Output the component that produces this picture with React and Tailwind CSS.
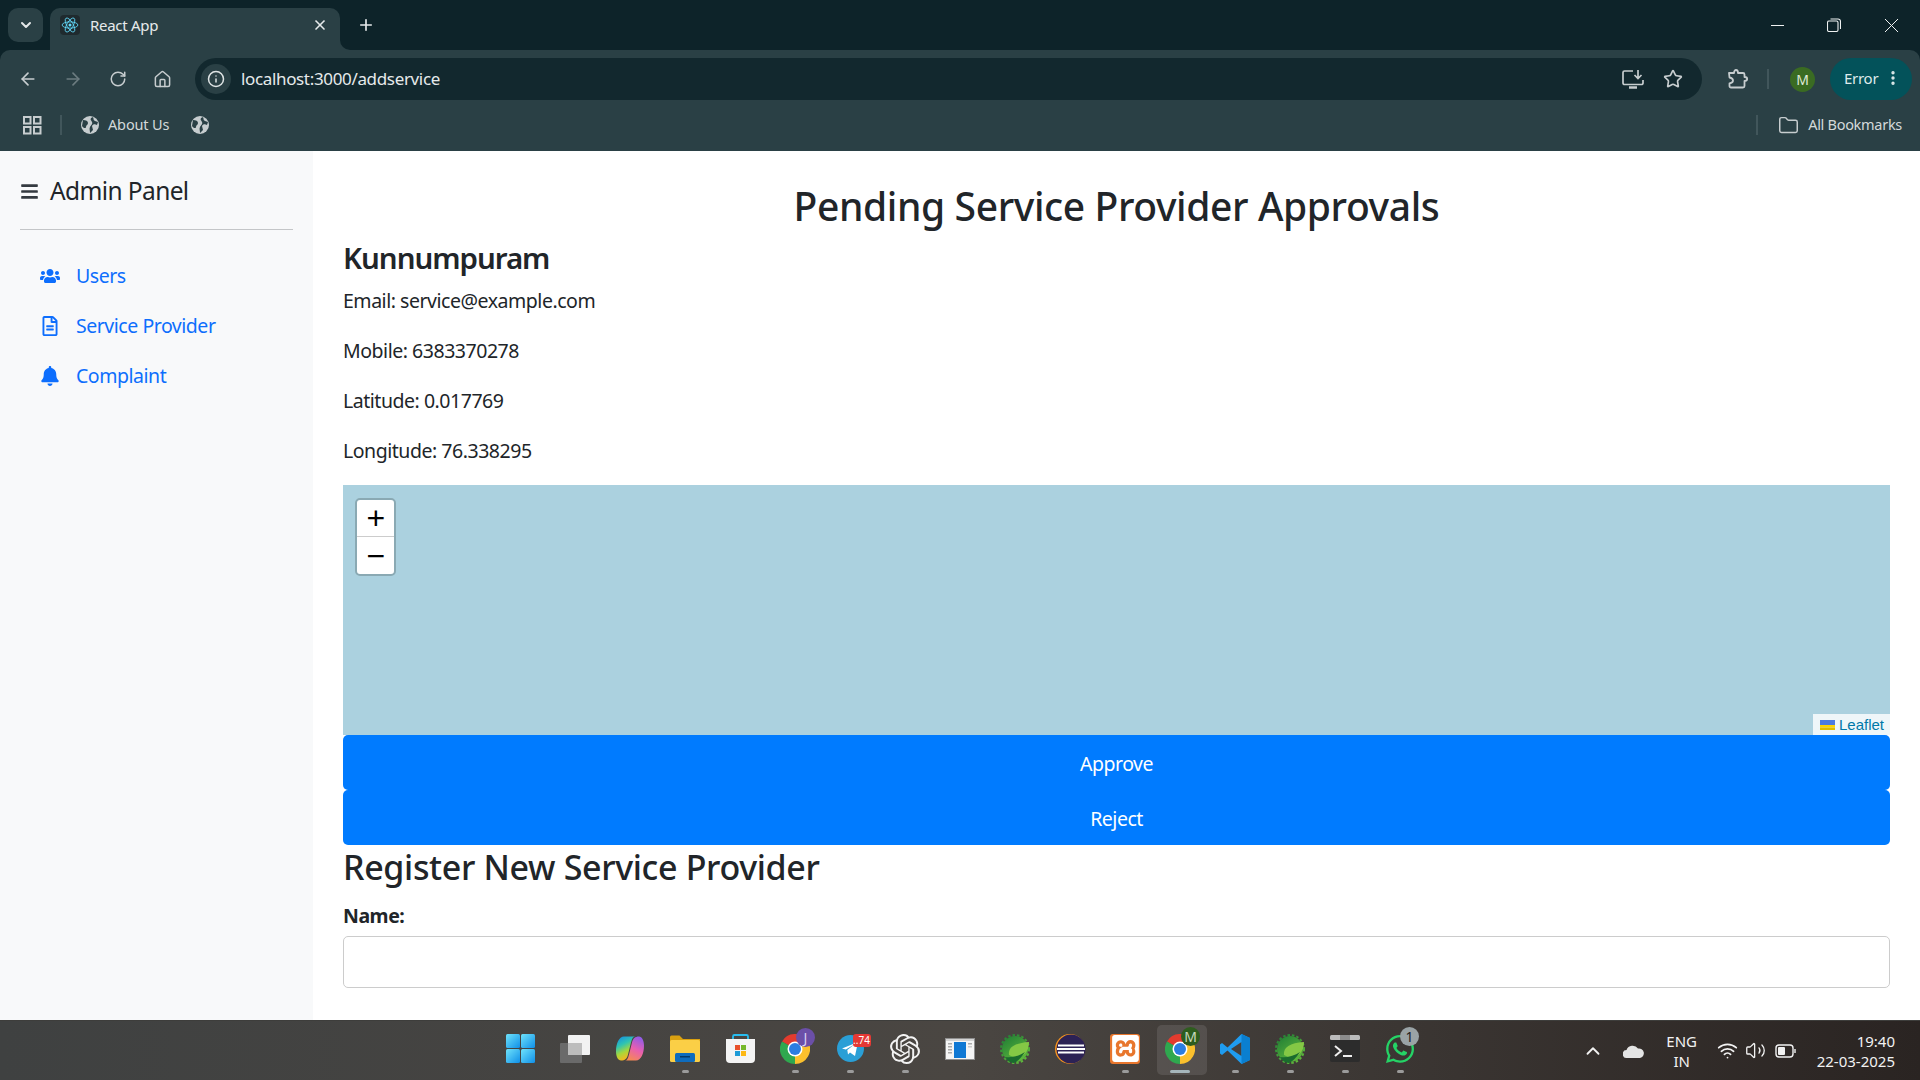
import { FaBars, FaUsers, FaRegFileAlt, FaBell, FaWhatsapp } from "react-icons/fa";
import { SiOpenai, SiXampp } from "react-icons/si";
import {
  ChevronDown, X, Plus, ArrowLeft, ArrowRight, RotateCw, Home, Info, Star,
  EllipsisVertical, Folder, ChevronUp, Wifi, Volume2,
} from "lucide-react";

const Globe = () => (
  <svg width="18" height="18" viewBox="0 0 18 18">
    <circle cx="9" cy="9" r="9" fill="#c7cdcf" />
    <path d="M2 4c3 0 5 1 5 3s-2 2-2 4-3 1-4-1zM12 1c1 2 0 3 2 4l3 1-1 3c-2-1-4-1-5 1l1 4-3 3c0-3-1-4 0-6s3-3 2-5-2-2-1-4z" fill="#2a4045" />
  </svg>
);

const ReactLogo = () => (
  <div className="w-5 h-5 bg-[#1f2a2e] rounded-sm flex items-center justify-center">
    <svg width="18" height="18" viewBox="-12 -12 24 24" fill="none" stroke="#61dafb" strokeWidth="1.1">
      <circle r="2" fill="#61dafb" stroke="none" />
      <ellipse rx="10.5" ry="4.2" />
      <ellipse rx="10.5" ry="4.2" transform="rotate(60)" />
      <ellipse rx="10.5" ry="4.2" transform="rotate(120)" />
    </svg>
  </div>
);

const InstallIcon = () => (
  <svg width="22" height="20" viewBox="0 0 22 20" fill="none" stroke="#c7cdcf" strokeWidth="1.7">
    <path d="M11 2H2.500A1.500 1.500 0 0 0 1 3.500V14a1.500 1.500 0 0 0 1.500 1.500h17A1.500 1.500 0 0 0 21 14v-3" />
    <path d="M16 1v8M12.500 6l3.500 3.500L19.500 6" />
    <path d="M7 18.500h8" strokeWidth="2.500" />
  </svg>
);

const ExtensionIcon = () => (
  <svg width="21" height="20" viewBox="0 0 21 20" fill="none" stroke="#c7cdcf" strokeWidth="1.800" strokeLinejoin="round">
    <path d="M2 4h5c0-4 4-4 4 0h5a1.500 1.500 0 0 1 1.500 1.500V8c3.500 0 3.500 4 0 4v5a1.500 1.500 0 0 1-1.500 1.500H4a1.500 1.500 0 0 1-1.500-1.500v-2.500C5 14 6 13 6 11.500S5 9 2.500 8.500z" />
  </svg>
);

const Dot = ({ wide }) => (
  <div className={wide ? "w-[20px] h-[3px] rounded-full bg-[#a6b6bb]" : "w-[7px] h-[3px] rounded-full bg-[#9b9b9b]"} />
);

const WindowsIcon = () => (
  <svg width="29" height="29" viewBox="0 0 29 29">
    <defs>
      <linearGradient id="win" x1="0" y1="0" x2="1" y2="1">
        <stop offset="0" stopColor="#6fe3fb" />
        <stop offset="1" stopColor="#0f8fe8" />
      </linearGradient>
    </defs>
    <rect width="14" height="14" rx="1.500" fill="url(#win)" />
    <rect x="15" width="14" height="14" rx="1.500" fill="url(#win)" />
    <rect y="15" width="14" height="14" rx="1.500" fill="url(#win)" />
    <rect x="15" y="15" width="14" height="14" rx="1.500" fill="url(#win)" />
  </svg>
);

const TaskViewIcon = () => (
  <svg width="30" height="28" viewBox="0 0 30 28">
    <rect x="0" y="8" width="22" height="20" rx="1" fill="#6a6a6a" />
    <rect x="8" y="0" width="22" height="20" rx="1" fill="#f2f2f2" />
    <rect x="8" y="8" width="14" height="12" fill="#bdbdbd" />
  </svg>
);

const CopilotIcon = () => (
  <svg width="28" height="25" viewBox="0 0 28 24">
    <defs>
      <linearGradient id="cp1" x1="0" y1="0" x2="0.4" y2="1">
        <stop offset="0" stopColor="#1288e8" />
        <stop offset="0.4" stopColor="#2fc4b2" />
        <stop offset="0.7" stopColor="#a8d83a" />
        <stop offset="1" stopColor="#f9b51f" />
      </linearGradient>
      <linearGradient id="cp2" x1="0.7" y1="0" x2="0.3" y2="1">
        <stop offset="0" stopColor="#8f5ce8" />
        <stop offset="0.5" stopColor="#e85fb0" />
        <stop offset="1" stopColor="#f68a52" />
      </linearGradient>
    </defs>
    <path d="M8 0h11c-2 0-3 2-4 6l-3 12c-1 4-3 6-7 6-3 0-5-4-5-9C0 7 3 0 8 0z" fill="url(#cp1)" />
    <path d="M20 24H9c2 0 3-2 4-6l3-12c1-4 3-6 7-6 3 0 5 4 5 9 0 8-3 15-8 15z" fill="url(#cp2)" />
  </svg>
);

const ExplorerIcon = () => (
  <svg width="30" height="27" viewBox="0 0 30 27">
    <path d="M0 2a1.500 1.500 0 0 1 1.500-1.500h8L13 4h17v4H0z" fill="#d9a010" />
    <rect y="5" width="30" height="22" rx="1.500" fill="#fbcf46" />
    <rect x="5" y="18" width="20" height="9" rx="1.500" fill="#0f6cbd" />
    <rect x="10" y="21" width="10" height="1.500" fill="#063a69" />
  </svg>
);

const StoreIcon = () => (
  <svg width="29" height="29" viewBox="0 0 29 29">
    <path d="M7 5V2.500A1.500 1.500 0 0 1 8.500 1h12A1.500 1.500 0 0 1 22 2.500V5" fill="none" stroke="#28bdf0" strokeWidth="1.800" />
    <path d="M0 5h29v20a4 4 0 0 1-4 4H4a4 4 0 0 1-4-4z" fill="#f4f4f4" />
    <rect x="9" y="11" width="5" height="5" fill="#e8502a" />
    <rect x="15" y="11" width="5" height="5" fill="#76b82a" />
    <rect x="9" y="17" width="5" height="5" fill="#1e9bd7" />
    <rect x="15" y="17" width="5" height="5" fill="#fdb813" />
  </svg>
);

const ChromeIcon = () => (
  <svg width="30" height="30" viewBox="0 0 30 30">
    <path d="M15 15 2 7.500A15 15 0 0 1 28 7.500z" fill="#e33b2e" />
    <path d="M15 15 2 7.500A15 15 0 0 0 15 30z" fill="#2fa84f" />
    <path d="M15 15 28 7.500A15 15 0 0 1 15 30z" fill="#fbc02d" />
    <circle cx="15" cy="15" r="7.500" fill="#fff" />
    <circle cx="15" cy="15" r="6" fill="#2a7de1" />
  </svg>
);

const TelegramIcon = () => (
  <svg width="27" height="27" viewBox="0 0 27 27">
    <circle cx="13.500" cy="13.500" r="13.500" fill="#2a9fd6" />
    <path d="M5 13.500 21 7l-3 14-5-3.500-2 2-.7-4.500 7-5.500-8.500 5z" fill="#fff" />
  </svg>
);

const SandboxIcon = () => (
  <svg width="30" height="22" viewBox="0 0 30 22">
    <rect x="0.500" y="0.500" width="29" height="21" fill="#f5f5f5" stroke="#8f8f8f" />
    <rect x="1" y="1" width="28" height="2" fill="#d4d4d4" />
    <rect x="3" y="5" width="4" height="1.500" fill="#aaa" />
    <rect x="3" y="8" width="4" height="1.500" fill="#aaa" />
    <rect x="3" y="11" width="4" height="1.500" fill="#aaa" />
    <rect x="3" y="14" width="4" height="1.500" fill="#aaa" />
    <rect x="23" y="5" width="4" height="1.500" fill="#aaa" />
    <rect x="23" y="8" width="4" height="1.500" fill="#ccc" />
    <rect x="9" y="4" width="12" height="16" fill="#0f78d4" />
  </svg>
);

const SpringIcon = ({ id }) => (
  <svg width="30" height="30" viewBox="0 0 30 30">
    <defs>
      <linearGradient id={id} x1="0" y1="0" x2="0.7" y2="1">
        <stop offset="0" stopColor="#1f7d35" />
        <stop offset="1" stopColor="#5fb83c" />
      </linearGradient>
    </defs>
    <circle cx="15" cy="15" r="13" fill={`url(#${id})`} />
    <circle cx="15" cy="15" r="14" fill="none" stroke={`url(#${id})`} strokeWidth="2" strokeDasharray="2.500 2" />
    <path d="M9 21C8 13 15 9 29 8c0 9-5 15-13 15-3 0-5-1-7-2z" fill="#84c845" />
    <path d="M5 23c7 1 14-1 20-5-4 6-7 9-11 11-4 0-7-3-9-6z" fill="#1a6b2e" />
  </svg>
);

const EclipseIcon = () => (
  <svg width="31" height="30" viewBox="0 0 31 30">
    <circle cx="15" cy="15" r="15" fill="#f7941e" />
    <circle cx="16" cy="15" r="14.500" fill="#2c2255" />
    <rect x="3" y="10.500" width="26" height="2" fill="#fff" />
    <rect x="2" y="14" width="28" height="2" fill="#fff" />
    <rect x="3" y="17.500" width="26" height="2" fill="#fff" />
  </svg>
);

const XamppIcon = () => (
  <div className="w-[30px] h-[30px] rounded-[3px] bg-[#e8762d] flex items-center justify-center">
    <SiXampp size={27} color="#fff" />
  </div>
);

const VscodeIcon = () => (
  <svg width="30" height="30" viewBox="0 0 30 30">
    <path d="M21.500 0 30 4v22l-8.500 4-14-13.500L2 21l-2-1.500v-9L2 9l5.500 4.500z" fill="#1f9cf0" />
    <path d="M21.500 8 11 15l10.500 7z" fill="#45403d" />
    <path d="M21.500 0 30 4v22l-8.500 4z" fill="#0a7fd0" />
  </svg>
);

const TerminalIcon = () => (
  <svg width="30" height="27" viewBox="0 0 30 27">
    <rect width="30" height="27" rx="2" fill="#2c2c2c" />
    <rect width="30" height="5" rx="1.500" fill="#bcbcbc" />
    <rect x="10" width="10" height="5" fill="#8c8c8c" />
    <path d="m5 11 6 5-6 5" fill="none" stroke="#eee" strokeWidth="2" />
    <rect x="13" y="20" width="9" height="2" fill="#eee" />
  </svg>
);

const apps = [
  { icon: <WindowsIcon /> },
  { icon: <TaskViewIcon /> },
  { icon: <CopilotIcon /> },
  { icon: <ExplorerIcon />, dot: true },
  { icon: <StoreIcon /> },
  {
    icon: <ChromeIcon />,
    dot: true,
    badge: <div className="absolute -top-[6px] left-[16px] w-[19px] h-[19px] rounded-full bg-[#6b4fa8] text-[#d9cdf0] text-[14px] flex items-center justify-center">J</div>,
  },
  {
    icon: <TelegramIcon />,
    dot: true,
    badge: <div className="absolute -top-[1px] left-[16px] h-[13px] w-[18px] rounded-[3px] bg-[#e53935] text-white text-[10px] leading-[13px] text-center">..74</div>,
  },
  { icon: <SiOpenai size={30} color="#f2f2f2" />, dot: true },
  { icon: <SandboxIcon /> },
  { icon: <SpringIcon id="spring1" /> },
  { icon: <EclipseIcon /> },
  { icon: <XamppIcon />, dot: true },
  {
    icon: <ChromeIcon />,
    dot: true,
    active: true,
    badge: <div className="absolute -top-[7px] left-[16px] w-[19px] h-[19px] rounded-full bg-[#2e5d1e] text-[#c7d8bd] text-[14px] flex items-center justify-center">M</div>,
  },
  { icon: <VscodeIcon />, dot: true },
  { icon: <SpringIcon id="spring2" />, dot: true },
  { icon: <TerminalIcon />, dot: true },
  {
    icon: <FaWhatsapp size={32} color="#25d366" />,
    dot: true,
    badge: <div className="absolute -top-[6px] left-[16px] w-[19px] h-[19px] rounded-full bg-[#9aa3a6] text-[#222] text-[14px] flex items-center justify-center">1</div>,
  },
];

const Chrome = () => (
  <div className="bg-[#0d2329]">
    {/* tab strip */}
    <div className="h-[50px] flex items-end pl-[8px]">
      <div className="w-[35px] h-[34px] mb-[8px] rounded-[10px] bg-[#2a4045] flex items-center justify-center">
        <ChevronDown size={16} color="#e4e8e9" strokeWidth={3} />
      </div>
      <div className="relative w-[290px] h-[42px] ml-[7px] rounded-t-[10px] bg-[#2a4045] flex items-center pl-[10px] pr-[12px] pb-[8px]">
        <ReactLogo />
        <span className="ml-[10px] text-[15px] tracking-[-0.02em] text-[#e6eaeb]">React App</span>
        <X size={16} color="#e6eaeb" strokeWidth={2.5} className="ml-auto" />
        <div className="absolute left-full bottom-0 w-[10px] h-[10px] bg-[#2a4045]">
          <div className="w-full h-full rounded-bl-[10px] bg-[#0d2329]" />
        </div>
      </div>
      <div className="ml-[17px] mb-[8px] h-[34px] flex items-center">
        <Plus size={18} color="#e6eaeb" strokeWidth={2.2} />
      </div>
      <div className="ml-auto flex items-center h-[50px] pr-[22px] text-[#eef1f1]">
        <svg width="13" height="13" viewBox="0 0 13 13" fill="none" stroke="currentColor" strokeWidth="1">
          <path d="M0 6.500h13" />
        </svg>
        <svg className="ml-[43px]" width="14" height="14" viewBox="0 0 14 14" fill="none" stroke="currentColor" strokeWidth="1.100">
          <rect x="0.500" y="3" width="10.500" height="10.500" rx="1.500" />
          <path d="M3.500 1h7.500a2.500 2.500 0 0 1 2.500 2.500V11" />
        </svg>
        <svg className="ml-[44px]" width="13" height="13" viewBox="0 0 13 13" fill="none" stroke="currentColor" strokeWidth="1">
          <path d="M0 0l13 13M13 0L0 13" />
        </svg>
      </div>
    </div>

    {/* toolbar */}
    <div className="h-[60px] rounded-t-[10px] bg-[#2a4045] flex items-center pl-[18px] pr-[8px] pb-[2px]">
      <ArrowLeft size={20} color="#c7cdcf" strokeWidth={2} />
      <ArrowRight size={20} color="#6c7c80" strokeWidth={2} className="ml-[25px]" />
      <RotateCw size={18} color="#c7cdcf" strokeWidth={2} className="ml-[26px]" />
      <Home size={19} color="#c7cdcf" strokeWidth={1.9} className="ml-[26px]" />
      <div className="ml-[23px] w-[1509px] h-[42px] rounded-full bg-[#12282e] flex items-center pl-[6px] pr-[19px]">
        <div className="w-[30px] h-[30px] rounded-full bg-[#2a4045] flex items-center justify-center">
          <Info size={18} color="#dfe4e5" strokeWidth={2} />
        </div>
        <span className="ml-[10px] text-[17px] tracking-[-0.02em] text-[#e6eaeb]">localhost:3000/addservice</span>
        <div className="ml-auto flex items-center">
          <InstallIcon />
          <Star size={20} color="#c7cdcf" strokeWidth={2} className="ml-[19px]" />
        </div>
      </div>
      <div className="ml-[25px]"><ExtensionIcon /></div>
      <div className="ml-[19px] w-[2px] h-[20px] bg-[#41565b]" />
      <div className="ml-[21px] w-[25px] h-[25px] rounded-full bg-[#3a6b22] text-[#dfe9d8] text-[14px] flex items-center justify-center">M</div>
      <div className="ml-[15px] w-[82px] h-[42px] rounded-full bg-[#03525a] flex items-center pl-[14px] pb-[2px] text-[15px] tracking-[-0.02em] text-[#dfeaeb]">
        Error
        <EllipsisVertical size={18} color="#dfeaeb" strokeWidth={2.5} className="ml-[6px]" />
      </div>
    </div>

    {/* bookmarks */}
    <div className="h-[41px] bg-[#2a4045] flex items-center pl-[23px] pr-[18px] pb-[11px] text-[14.5px] tracking-[-0.01em] text-[#d3d9da]">
      <svg width="19" height="19" viewBox="0 0 19 19" fill="none" stroke="#c7cdcf" strokeWidth="2">
        <rect x="1" y="1" width="6.500" height="6.500" />
        <rect x="11" y="1" width="6.500" height="6.500" />
        <rect x="1" y="11" width="6.500" height="6.500" />
        <rect x="11" y="11" width="6.500" height="6.500" />
      </svg>
      <div className="ml-[18px] w-[2px] h-[20px] bg-[#41565b]" />
      <div className="ml-[19px]"><Globe /></div>
      <span className="ml-[9px]">About Us</span>
      <div className="ml-[22px]"><Globe /></div>
      <div className="ml-auto w-[2px] h-[20px] bg-[#41565b]" />
      <Folder size={21} color="#c7cdcf" strokeWidth={1.7} className="ml-[20px]" />
      <span className="ml-[9px] tracking-[-0.02em]">All Bookmarks</span>
    </div>
  </div>
);

const Sidebar = () => (
  <aside className="w-[313px] shrink-0 bg-[#f8f9fa] px-[20px]">
    <div className="h-[79px] flex items-center border-b border-[#c4c6c8] pt-[2px]">
      <FaBars size={19} color="#343a40" />
      <span className="ml-[11px] text-[24.500px] tracking-[-0.025em] text-[#212529]">Admin Panel</span>
    </div>
    <nav className="mt-[21px] flex flex-col text-[19.500px] tracking-[-0.024em] text-[#0d6efd]">
      <a className="h-[50px] flex items-center pl-[20px]">
        <span className="w-[20px] flex justify-center"><FaUsers size={20} /></span>
        <span className="ml-[16px]">Users</span>
      </a>
      <a className="h-[50px] flex items-center pl-[20px]">
        <span className="w-[20px] flex justify-center"><FaRegFileAlt size={20} /></span>
        <span className="ml-[16px]">Service Provider</span>
      </a>
      <a className="h-[50px] flex items-center pl-[20px]">
        <span className="w-[20px] flex justify-center"><FaBell size={20} /></span>
        <span className="ml-[16px]">Complaint</span>
      </a>
    </nav>
  </aside>
);

const MapBox = () => (
  <div className="relative h-[250px] bg-[#abd1df]">
    <div className="absolute left-[12px] top-[13px] w-[41px] rounded-[5px] border-[2px] border-[#8aa9b3] bg-white overflow-hidden">
      <div className="h-[37px] flex items-center justify-center border-b border-[#ccc] text-black text-[32px] font-['Liberation_Sans'] leading-none">+</div>
      <div className="h-[37px] flex items-center justify-center text-black text-[32px] font-['Liberation_Sans'] leading-none">−</div>
    </div>
    <div className="absolute right-0 bottom-0 h-[21px] w-[77px] bg-white/80 flex items-center pl-[7px] pt-[1px] text-[15px] font-['Liberation_Sans'] tracking-normal text-[#0078a8]">
      <svg width="15" height="10" viewBox="0 0 15 10">
        <rect width="15" height="5" fill="#4c7be1" />
        <rect y="5" width="15" height="2.500" fill="#ffd500" />
        <rect y="7.500" width="15" height="2.500" fill="#e0bc00" />
      </svg>
      <span className="ml-[4px]">Leaflet</span>
    </div>
  </div>
);

const Main = () => (
  <main className="flex-1 min-w-0 px-[30px] pt-[31px] text-[19.500px] tracking-[-0.024em] text-[#212529]">
    <h1 className="text-[39px] leading-[48px] tracking-[-0.01em] font-medium text-center">Pending Service Provider Approvals</h1>
    <h4 className="mt-[10px] text-[29.500px] leading-[36px] tracking-[-0.035em] font-semibold">Kunnumpuram</h4>
    <p className="mt-[10px] leading-[30px]">Email: service@example.com</p>
    <p className="mt-[20px] leading-[30px]">Mobile: 6383370278</p>
    <p className="mt-[20px] leading-[30px]">Latitude: 0.017769</p>
    <p className="mt-[20px] leading-[30px]">Longitude: 76.338295</p>
    <div className="mt-[19px]"><MapBox /></div>
    <button className="block w-full h-[55px] pt-[2px] rounded-[5px] bg-[#007bff] text-white">Approve</button>
    <button className="block w-full h-[55px] pt-[2px] rounded-[5px] bg-[#007bff] text-white">Reject</button>
    <h2 className="text-[34px] leading-[44px] tracking-[-0.01em] font-medium">Register New Service Provider</h2>
    <label className="block mt-[12px] leading-[30px] font-bold">Name:</label>
    <input className="block mt-[5px] w-full h-[52px] rounded-[5px] border border-[#ccc] bg-white" />
  </main>
);

const Taskbar = () => (
  <div className="h-[60px] shrink-0 grid grid-cols-[1fr_auto_1fr] border-t border-[#3d3d3b] bg-gradient-to-r from-[#3f4141] via-[#4a4642] to-[#2a2422]">
    <div />
    <div className="flex">
      {apps.map((app, i) => (
        <div key={i} className="relative w-[55px] h-[59px] flex items-center justify-center">
          {app.active && <div className="absolute left-[4px] top-[4px] w-[50px] h-[50px] rounded-[5px] bg-white/10" />}
          <div className="relative mb-[4px] flex items-center justify-center">
            {app.icon}
            {app.badge}
          </div>
          {app.dot && (
            <div className="absolute bottom-[7px] left-0 right-0 flex justify-center">
              <Dot wide={app.active} />
            </div>
          )}
        </div>
      ))}
    </div>
    <div className="flex items-center justify-end pr-[25px] text-[15px] text-[#f2f2f2]">
      <ChevronUp size={22} strokeWidth={2} className="mr-[19px]" />
      <svg className="mr-[18px]" width="21" height="14" viewBox="0 0 21 14">
        <path d="M4 14a4 4 0 0 1-.5-8A6.500 6.500 0 0 1 15 4.500a4.800 4.800 0 0 1 2 9.500z" fill="#e4e4e4" />
      </svg>
      <div className="w-[40px] text-center leading-[20px]">ENG<br />IN</div>
      <Wifi size={21} strokeWidth={2} className="ml-[15px]" />
      <Volume2 size={21} strokeWidth={1.5} className="ml-[7px]" />
      <svg className="ml-[9px]" width="21" height="14" viewBox="0 0 21 14" fill="none" stroke="#f2f2f2" strokeWidth="1.400">
        <rect x="1" y="1" width="17" height="12" rx="3" />
        <rect x="3" y="3" width="7" height="8" rx="1" fill="#f2f2f2" stroke="none" />
        <path d="M20 5v4" />
      </svg>
      <div className="ml-[21px] text-right leading-[20px]">19:40<br />22-03-2025</div>
    </div>
  </div>
);

export default function App() {
  return (
    <div className="h-screen flex flex-col overflow-hidden bg-white font-['Noto_Sans',sans-serif]">
      <Chrome />
      <div className="flex-1 min-h-0 flex overflow-hidden">
        <Sidebar />
        <Main />
      </div>
      <Taskbar />
    </div>
  );
}
